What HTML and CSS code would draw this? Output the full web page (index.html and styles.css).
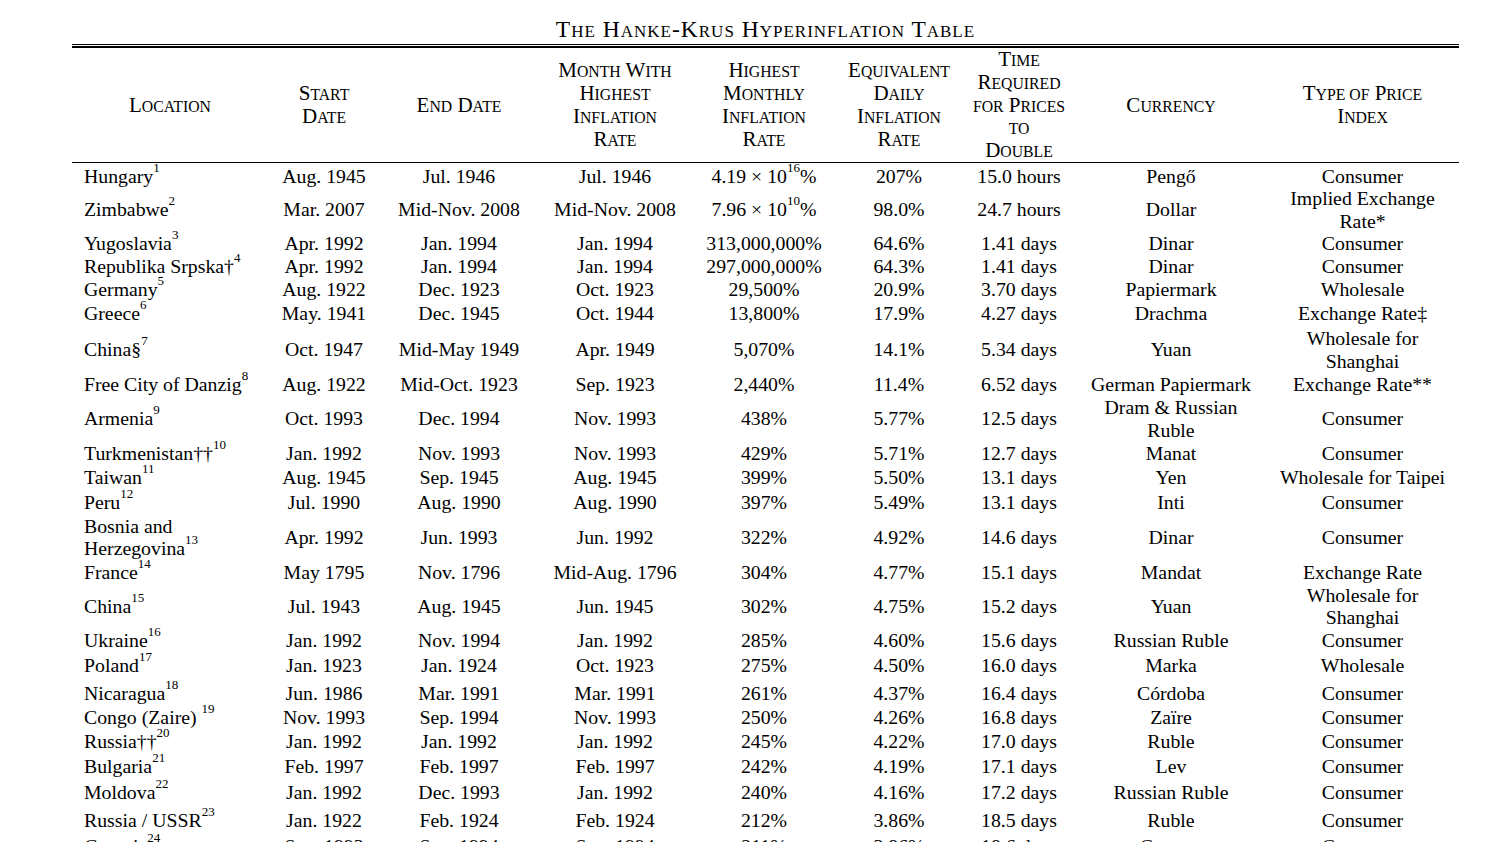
FILE: index.html
```html
<!DOCTYPE html>
<html lang="en">
<head>
<meta charset="utf-8">
<title>The Hanke-Krus Hyperinflation Table</title>
<link rel="stylesheet" href="styles.css">
</head>
<body>
<main class="page">
  <h1 class="title">T<span class="sc">he</span> H<span class="sc">anke</span>-K<span class="sc">rus</span> H<span class="sc">yperinflation</span> T<span class="sc">able</span></h1>
  <div class="double-rule"></div>
  <table class="hk">
    <colgroup>
      <col class="c-loc">
      <col class="c-start">
      <col class="c-end">
      <col class="c-month">
      <col class="c-high">
      <col class="c-daily">
      <col class="c-time">
      <col class="c-cur">
      <col class="c-type">
    </colgroup>
    <thead>
      <tr>
        <th>L<span class="sc">ocation</span></th>
        <th>S<span class="sc">tart</span><br>D<span class="sc">ate</span></th>
        <th>E<span class="sc">nd</span> D<span class="sc">ate</span></th>
        <th>M<span class="sc">onth</span> W<span class="sc">ith</span><br>H<span class="sc">ighest</span><br>I<span class="sc">nflation</span><br>R<span class="sc">ate</span></th>
        <th>H<span class="sc">ighest</span><br>M<span class="sc">onthly</span><br>I<span class="sc">nflation</span><br>R<span class="sc">ate</span></th>
        <th>E<span class="sc">quivalent</span><br>D<span class="sc">aily</span><br>I<span class="sc">nflation</span><br>R<span class="sc">ate</span></th>
        <th>T<span class="sc">ime</span><br>R<span class="sc">equired</span><br><span class="sc">for</span> P<span class="sc">rices</span><br><span class="sc">to</span><br>D<span class="sc">ouble</span></th>
        <th>C<span class="sc">urrency</span></th>
        <th>T<span class="sc">ype of</span> P<span class="sc">rice</span><br>I<span class="sc">ndex</span></th>
      </tr>
    </thead>
    <tbody>
      <tr class="g15">
        <td class="loc">Hungary<sup class="fn">1</sup></td><td>Aug. 1945</td><td>Jul. 1946</td><td>Jul. 1946</td><td>4.19 × 10<sup class="fn">16</sup>%</td><td>207%</td><td>15.0 hours</td><td>Pengő</td><td>Consumer</td>
      </tr>
      <tr class="g0">
        <td class="loc">Zimbabwe<sup class="fn">2</sup></td><td>Mar. 2007</td><td>Mid-Nov. 2008</td><td>Mid-Nov. 2008</td><td>7.96 × 10<sup class="fn">10</sup>%</td><td>98.0%</td><td>24.7 hours</td><td>Dollar</td><td>Implied Exchange<br>Rate*</td>
      </tr>
      <tr class="g0">
        <td class="loc">Yugoslavia<sup class="fn">3</sup></td><td>Apr. 1992</td><td>Jan. 1994</td><td>Jan. 1994</td><td>313,000,000%</td><td>64.6%</td><td>1.41 days</td><td>Dinar</td><td>Consumer</td>
      </tr>
      <tr class="g0">
        <td class="loc">Republika Srpska†<sup class="fn">4</sup></td><td>Apr. 1992</td><td>Jan. 1994</td><td>Jan. 1994</td><td>297,000,000%</td><td>64.3%</td><td>1.41 days</td><td>Dinar</td><td>Consumer</td>
      </tr>
      <tr class="g1">
        <td class="loc">Germany<sup class="fn">5</sup></td><td>Aug. 1922</td><td>Dec. 1923</td><td>Oct. 1923</td><td>29,500%</td><td>20.9%</td><td>3.70 days</td><td>Papiermark</td><td>Wholesale</td>
      </tr>
      <tr class="g1">
        <td class="loc">Greece<sup class="fn">6</sup></td><td>May. 1941</td><td>Dec. 1945</td><td>Oct. 1944</td><td>13,800%</td><td>17.9%</td><td>4.27 days</td><td>Drachma</td><td>Exchange Rate‡</td>
      </tr>
      <tr class="g3">
        <td class="loc">China§<sup class="fn">7</sup></td><td>Oct. 1947</td><td>Mid-May 1949</td><td>Apr. 1949</td><td>5,070%</td><td>14.1%</td><td>5.34 days</td><td>Yuan</td><td>Wholesale for<br>Shanghai</td>
      </tr>
      <tr class="g1">
        <td class="loc">Free City of Danzig<sup class="fn">8</sup></td><td>Aug. 1922</td><td>Mid-Oct. 1923</td><td>Sep. 1923</td><td>2,440%</td><td>11.4%</td><td>6.52 days</td><td>German Papiermark</td><td>Exchange Rate**</td>
      </tr>
      <tr class="g05">
        <td class="loc">Armenia<sup class="fn">9</sup></td><td>Oct. 1993</td><td>Dec. 1994</td><td>Nov. 1993</td><td>438%</td><td>5.77%</td><td>12.5 days</td><td>Dram &amp; Russian<br>Ruble</td><td>Consumer</td>
      </tr>
      <tr class="g1">
        <td class="loc">Turkmenistan††<sup class="fn">10</sup></td><td>Jan. 1992</td><td>Nov. 1993</td><td>Nov. 1993</td><td>429%</td><td>5.71%</td><td>12.7 days</td><td>Manat</td><td>Consumer</td>
      </tr>
      <tr class="g15">
        <td class="loc">Taiwan<sup class="fn">11</sup></td><td>Aug. 1945</td><td>Sep. 1945</td><td>Aug. 1945</td><td>399%</td><td>5.50%</td><td>13.1 days</td><td>Yen</td><td>Wholesale for Taipei</td>
      </tr>
      <tr class="g2">
        <td class="loc">Peru<sup class="fn">12</sup></td><td>Jul. 1990</td><td>Aug. 1990</td><td>Aug. 1990</td><td>397%</td><td>5.49%</td><td>13.1 days</td><td>Inti</td><td>Consumer</td>
      </tr>
      <tr class="g15">
        <td class="loc">Bosnia and<br>Herzegovina<sup class="fn">13</sup></td><td>Apr. 1992</td><td>Jun. 1993</td><td>Jun. 1992</td><td>322%</td><td>4.92%</td><td>14.6 days</td><td>Dinar</td><td>Consumer</td>
      </tr>
      <tr class="g1">
        <td class="loc">France<sup class="fn">14</sup></td><td>May 1795</td><td>Nov. 1796</td><td>Mid-Aug. 1796</td><td>304%</td><td>4.77%</td><td>15.1 days</td><td>Mandat</td><td>Exchange Rate</td>
      </tr>
      <tr class="g05">
        <td class="loc">China<sup class="fn">15</sup></td><td>Jul. 1943</td><td>Aug. 1945</td><td>Jun. 1945</td><td>302%</td><td>4.75%</td><td>15.2 days</td><td>Yuan</td><td>Wholesale for<br>Shanghai</td>
      </tr>
      <tr class="g05">
        <td class="loc">Ukraine<sup class="fn">16</sup></td><td>Jan. 1992</td><td>Nov. 1994</td><td>Jan. 1992</td><td>285%</td><td>4.60%</td><td>15.6 days</td><td>Russian Ruble</td><td>Consumer</td>
      </tr>
      <tr class="g25">
        <td class="loc">Poland<sup class="fn">17</sup></td><td>Jan. 1923</td><td>Jan. 1924</td><td>Oct. 1923</td><td>275%</td><td>4.50%</td><td>16.0 days</td><td>Marka</td><td>Wholesale</td>
      </tr>
      <tr class="g5">
        <td class="loc">Nicaragua<sup class="fn">18</sup></td><td>Jun. 1986</td><td>Mar. 1991</td><td>Mar. 1991</td><td>261%</td><td>4.37%</td><td>16.4 days</td><td>Córdoba</td><td>Consumer</td>
      </tr>
      <tr class="g2">
        <td class="loc">Congo (Zaire) <sup class="fn">19</sup></td><td>Nov. 1993</td><td>Sep. 1994</td><td>Nov. 1993</td><td>250%</td><td>4.26%</td><td>16.8 days</td><td>Zaïre</td><td>Consumer</td>
      </tr>
      <tr class="g15">
        <td class="loc">Russia††<sup class="fn">20</sup></td><td>Jan. 1992</td><td>Jan. 1992</td><td>Jan. 1992</td><td>245%</td><td>4.22%</td><td>17.0 days</td><td>Ruble</td><td>Consumer</td>
      </tr>
      <tr class="g2">
        <td class="loc">Bulgaria<sup class="fn">21</sup></td><td>Feb. 1997</td><td>Feb. 1997</td><td>Feb. 1997</td><td>242%</td><td>4.19%</td><td>17.1 days</td><td>Lev</td><td>Consumer</td>
      </tr>
      <tr class="g4">
        <td class="loc">Moldova<sup class="fn">22</sup></td><td>Jan. 1992</td><td>Dec. 1993</td><td>Jan. 1992</td><td>240%</td><td>4.16%</td><td>17.2 days</td><td>Russian Ruble</td><td>Consumer</td>
      </tr>
      <tr class="g5">
        <td class="loc">Russia / USSR<sup class="fn">23</sup></td><td>Jan. 1922</td><td>Feb. 1924</td><td>Feb. 1924</td><td>212%</td><td>3.86%</td><td>18.5 days</td><td>Ruble</td><td>Consumer</td>
      </tr>
      <tr class="g4">
        <td class="loc">Georgia<sup class="fn">24</sup></td><td>Sep. 1993</td><td>Sep. 1994</td><td>Sep. 1994</td><td>211%</td><td>3.86%</td><td>18.6 days</td><td>Coupon</td><td>Consumer</td>
      </tr>
    </tbody>
  </table>
</main>
</body>
</html>
```

FILE: styles.css
```css
html, body {
  margin: 0;
  padding: 0;
  background: #fff;
  overflow: hidden;
}

body {
  font-family: "Liberation Serif", "Times New Roman", serif;
  color: #000;
}

.page {
  width: 1387px;
  margin-left: 72px;
  padding-top: 15px;
}

.title {
  margin: 0;
  font-weight: normal;
  font-size: 23.5px;
  line-height: 29px;
  letter-spacing: 1px;
  text-align: center;
}

.title .sc {
  font-size: 17px;
  line-height: 0;
  text-transform: uppercase;
}

.double-rule {
  height: 1px;
  border-top: 1px solid #000;
  border-bottom: 2px solid #000;
}

.hk {
  width: 1387px;
  table-layout: fixed;
  border-collapse: separate;
  border-spacing: 0;
  font-size: 19.8px;
  line-height: 22.5px;
}

.c-loc { width: 196px; }
.c-start { width: 112px; }
.c-end { width: 158px; }
.c-month { width: 154px; }
.c-high { width: 144px; }
.c-daily { width: 126px; }
.c-time { width: 114px; }
.c-cur { width: 190px; }
.c-type { width: 193px; }

.hk thead tr {
  height: 115px;
}

.hk th {
  padding: 0;
  font-weight: normal;
  font-size: 21px;
  line-height: 22.8px;
  text-align: center;
  vertical-align: middle;
  border-bottom: 1px solid #000;
  white-space: nowrap;
}

.hk th .sc {
  font-size: 15.75px;
  line-height: 0;
  text-transform: uppercase;
}

.hk td {
  padding: 0;
  text-align: center;
  vertical-align: middle;
  white-space: nowrap;
}

.hk td.loc {
  text-align: left;
  padding-left: 12px;
}

.fn {
  font-size: 13px;
  line-height: 0;
  vertical-align: 11px;
}

.g0 td { padding-top: 0; }
.g05 td { padding-top: 0.5px; }
.g1 td { padding-top: 1px; }
.g15 td { padding-top: 1.5px; }
.g2 td { padding-top: 2px; }
.g25 td { padding-top: 2.5px; }
.g3 td { padding-top: 3px; }
.g4 td { padding-top: 4px; }
.g5 td { padding-top: 5px; }
```
